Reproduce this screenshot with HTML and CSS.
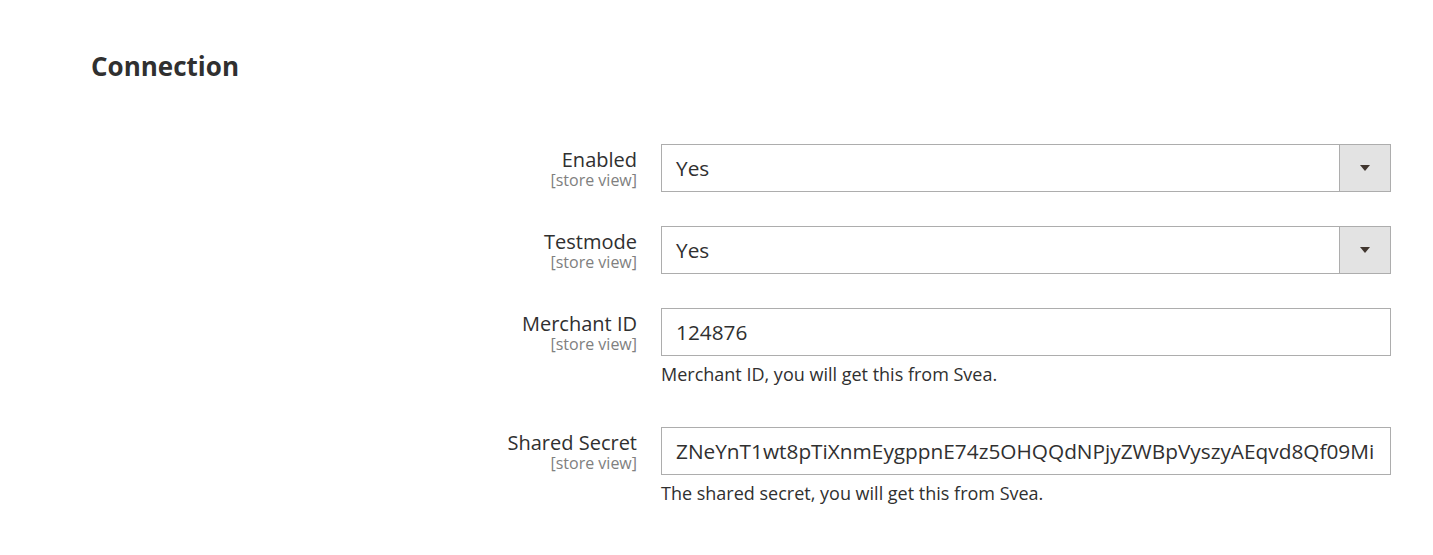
FILE: index.html
```html
<!DOCTYPE html>
<html lang="en">
<head>
<meta charset="utf-8">
<title>Connection</title>
<link rel="stylesheet" href="styles.css">
</head>
<body>
<div class="page">
  <h2 class="section-title">Connection</h2>
  <form class="config-form">
    <div class="field-row">
      <div class="field-label">
        <span class="label-text">Enabled</span>
        <span class="scope">[store view]</span>
      </div>
      <div class="field-control">
        <div class="select">
          <span class="select-value">Yes</span>
          <span class="select-arrow"><span class="triangle"></span></span>
        </div>
      </div>
    </div>
    <div class="field-row">
      <div class="field-label">
        <span class="label-text">Testmode</span>
        <span class="scope">[store view]</span>
      </div>
      <div class="field-control">
        <div class="select">
          <span class="select-value">Yes</span>
          <span class="select-arrow"><span class="triangle"></span></span>
        </div>
      </div>
    </div>
    <div class="field-row has-note">
      <div class="field-label">
        <span class="label-text">Merchant ID</span>
        <span class="scope">[store view]</span>
      </div>
      <div class="field-control">
        <div class="input"><span class="input-value">124876</span></div>
        <p class="note">Merchant ID, you will get this from Svea.</p>
      </div>
    </div>
    <div class="field-row has-note">
      <div class="field-label">
        <span class="label-text">Shared Secret</span>
        <span class="scope">[store view]</span>
      </div>
      <div class="field-control">
        <div class="input"><span class="input-value">ZNeYnT1wt8pTiXnmEygppnE74z5OHQQdNPjyZWBpVyszyAEqvd8Qf09Mi</span></div>
        <p class="note">The shared secret, you will get this from Svea.</p>
      </div>
    </div>
  </form>
</div>
</body>
</html>
```
FILE: styles.css
```css
html, body {
  margin: 0;
  padding: 0;
  background: #ffffff;
}
body {
  font-family: "Open Sans", "Liberation Sans", sans-serif;
  color: #303030;
}
.page {
  padding: 46px 0 0 91px;
}
.section-title {
  margin: 0;
  font-size: 26px;
  font-weight: 700;
  line-height: 40px;
  color: #303030;
}
.config-form {
  margin-top: 58px;
  margin-left: -91px;
}
.field-row {
  display: grid;
  grid-template-columns: 637px 730px;
  column-gap: 24px;
  align-items: start;
  margin-bottom: 34px;
}
.field-row.has-note {
  margin-bottom: 41px;
}
.field-label {
  display: flex;
  flex-direction: column;
  align-items: flex-end;
  padding-top: 4px;
  text-align: right;
}
.label-text {
  font-size: 20px;
  line-height: 23px;
  color: #303030;
}
.scope {
  font-size: 16px;
  line-height: 18px;
  color: #808080;
}
.select, .input {
  box-sizing: border-box;
  height: 48px;
  border: 1px solid #adadad;
  background: #ffffff;
  display: flex;
  align-items: center;
  overflow: hidden;
}
.select-value, .input-value {
  flex: 1;
  padding-left: 14px;
  padding-right: 12px;
  font-size: 20.8px;
  color: #303030;
  white-space: nowrap;
  overflow: hidden;
}
.select-arrow {
  align-self: stretch;
  width: 50px;
  background: #e3e3e3;
  border-left: 1px solid #adadad;
  display: flex;
  align-items: center;
  justify-content: center;
}
.triangle {
  width: 0;
  height: 0;
  border-left: 5px solid transparent;
  border-right: 5px solid transparent;
  border-top: 6px solid #41362f;
}
.note {
  margin: 6px 0 0;
  font-size: 18px;
  line-height: 24px;
  color: #303030;
}
```
